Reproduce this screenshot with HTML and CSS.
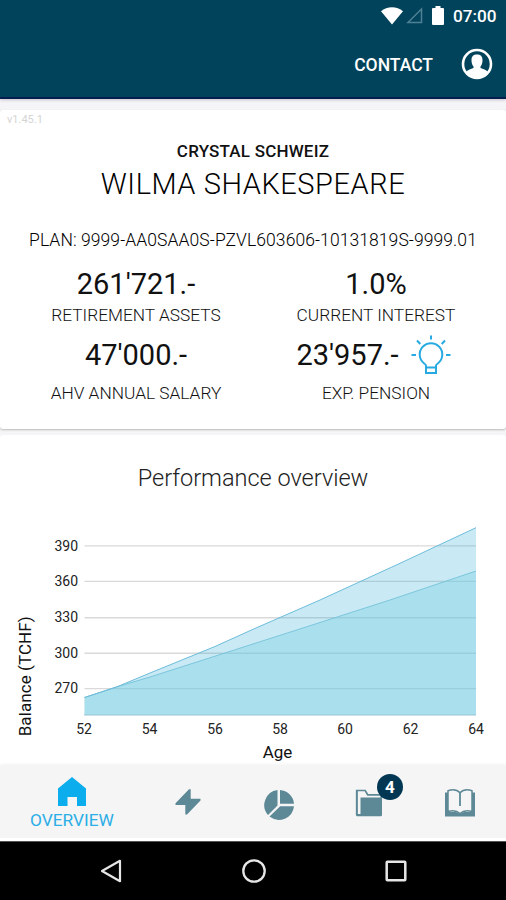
FILE: index.html
```html
<!DOCTYPE html>
<html lang="en">
<head>
<meta charset="utf-8">
<title>Overview</title>
<link rel="stylesheet" href="styles.css">
</head>
<body>
<div class="phone">
  <header class="header">
    <div class="status">
      <svg class="wifi" width="22" height="18" viewBox="0 0 22 18"><path d="M0 4.2C6-1.1 16-1.1 22 4.2L11 17.5z" fill="#fff"/></svg>
      <svg class="signal" width="18" height="18" viewBox="0 0 18 18"><path d="M15.500 2v13.500H2z" fill="none" stroke="#4f8095" stroke-width="1.500"/></svg>
      <svg class="battery" width="12" height="19" viewBox="0 0 12 19"><path d="M3.500 0h5v2H11q1 0 1 1v15q0 1-1 1H1q-1 0-1-1V3q0-1 1-1h2.500z" fill="#fff"/></svg>
      <span class="clock">07:00</span>
    </div>
    <div class="toolbar">
      <a class="contact">CONTACT</a>
      <svg class="avatar" width="32" height="32" viewBox="0 0 32 32">
        <circle cx="16" cy="16" r="14" fill="none" stroke="#fff" stroke-width="2.600"/>
        <path d="M5 24c2-2.600 5-3 7.500-4v-1.500c-1.500-1.500-2-4-2-6.200 0-4 2-5.700 5.500-5.700s5.500 1.700 5.500 5.700c0 2.200-.5 4.700-2 6.200V20c2.500 1 5.500 1.400 7.500 4-2.500 3.600-6.500 6-11 6s-8.500-2.400-11-6z" fill="#fff"/>
      </svg>
    </div>
  </header>

  <main class="content">
    <section class="card summary">
      <div class="version">v1.45.1</div>
      <h2 class="company"><span>CRYSTAL SCHWEIZ</span></h2>
      <h1 class="person"><span>WILMA SHAKESPEARE</span></h1>
      <div class="plan"><span>PLAN: 9999-AA0SAA0S-PZVL603606-10131819S-9999.01</span></div>
      <div class="figures">
        <div class="figure"><div class="value">261'721.-</div><div class="label">RETIREMENT ASSETS</div></div>
        <div class="figure"><div class="value">1.0%</div><div class="label">CURRENT INTEREST</div></div>
        <div class="figure low"><div class="value">47'000.-</div><div class="label">AHV ANNUAL SALARY</div></div>
        <div class="figure low"><div class="value pension"><span>23'957.-</span>
          <svg class="bulb" width="40" height="40" viewBox="0 0 40 40" fill="none" stroke="#27aae1" stroke-width="2"><path d="M15 32.500v-1.700c0-1-.8-1.700-1.800-2.300a11.300 11.300 0 1 1 13.600 0c-1 .6-1.800 1.300-1.800 2.300v1.700M15 32.500h10V38H15zM20 .5v4M6 5.500l3.300 3.500M34 5.500l-3.300 3.500M.5 20H5M35 20h4.500"/></svg>
        </div><div class="label">EXP. PENSION</div></div>
      </div>
    </section>

    <section class="card performance">
      <h3 class="chart-title"><span>Performance overview</span></h3>
      <svg class="chart" width="506" height="260" viewBox="0 506 506 260">
        <g stroke="#d9d9d9" stroke-width="1.400"><path d="M84.500 545.900H476M84.500 581.400H476M84.500 617.700H476M84.500 653.200H476M84.500 688.600H476"/></g>
        <path d="M84.500 697.500L117 686.800L150 673L215 646.500L253 629.300L320 600L400 563.300L476 527.700V715H84.500z" fill="#27aad5" fill-opacity=".25"/>
        <path d="M84.500 697.500L117 686.800L150 677L215 656.200L253 644L320 622.500L390 600L476 571V715H84.500z" fill="#7cd0e6" fill-opacity=".4"/>
        <path d="M84.500 697.500L117 686.800L150 677L215 656.200L253 644L320 622.500L390 600L476 571" fill="none" stroke="#7bc6dc" stroke-width="1"/>
        <path d="M84.500 697.500L117 686.800L150 673L215 646.500L253 629.300L320 600L400 563.300L476 527.700" fill="none" stroke="#6dbcda" stroke-width="1"/>
        <path d="M84 715H476" stroke="#9bc5d2" stroke-width="1"/>
        <g class="tick y"><text x="78" y="550.500">390</text><text x="78" y="586">360</text><text x="78" y="622.300">330</text><text x="78" y="658">300</text><text x="78" y="693.300">270</text></g>
        <g class="tick x"><text x="84" y="733.500">52</text><text x="149.500" y="733.500">54</text><text x="215" y="733.500">56</text><text x="280" y="733.500">58</text><text x="345" y="733.500">60</text><text x="410.500" y="733.500">62</text><text x="476" y="733.500">64</text></g>
        <text class="axis" x="277.500" y="757.500">Age</text>
        <text class="axis" transform="translate(31 676.300) rotate(-90)" textLength="120">Balance (TCHF)</text>
      </svg>
    </section>
  </main>

  <nav class="tabs">
    <a class="tab active">
      <svg width="28" height="30" viewBox="0 0 28 30"><path d="M14 0l14 11.500V29H19V20H9.500v9H0V11.500z" fill="#0badec"/></svg>
      <span>OVERVIEW</span>
    </a>
    <a class="tab"><svg width="26" height="26" viewBox="0 0 26 26"><path d="M14 .3L.5 14.300v1.700h9.800V25.500h1.700L25.500 11.500V9.800h-9.800V.3z" fill="#5d8997"/></svg></a>
    <a class="tab"><svg width="32" height="32" viewBox="0 0 32 32" fill="#5d8997"><path d="M14.500 1v15.500L5 26A15.200 15.200 0 0 1 14.500 1zM17 1A15 15 0 0 1 31 14.700H17zM31 17.200A15.200 15.200 0 0 1 6.500 27.600l10.700-10.400z"/></svg></a>
    <a class="tab"><span class="folder">
      <svg width="28" height="28" viewBox="0 0 28 28"><path d="M1.700 26V1.500h8.500l2.500 4.300h13.500v6" fill="none" stroke="#5d8997" stroke-width="1.700"/><path d="M1 2h1.700v23H5.500V8.500H27V26q0 1.300-1.300 1.300H2.300Q1 27.300 1 26z" fill="#5d8997"/></svg>
      <b class="badge">4</b></span></a>
    <a class="tab book"><svg width="30" height="28" viewBox="0 0 30 28"><path d="M0 3.500h3.500V23H11l4 1.800 4-1.800h7.500V3.500H30V27.500H0z" fill="#5d8997"/><path d="M3 22.500V1.700c4-1.400 9-1 12 2 3-3 8-3.400 12-2v20.800c-5-1.600-9-.8-12 2-3-2.800-7-3.600-12-2z" fill="#f5f5f5" stroke="#5d8997" stroke-width="1.500"/><path d="M15 4v13" stroke="#5d8997" stroke-width="1.800"/></svg></a>
  </nav>

  <footer class="system">
    <svg width="22" height="24" viewBox="0 0 22 24"><path d="M20 1.800v20.400L2 12z" fill="none" stroke="#e6e6e6" stroke-width="2.200" stroke-linejoin="round"/></svg>
    <svg width="24" height="24" viewBox="0 0 24 24"><circle cx="12" cy="12" r="10.700" fill="none" stroke="#e6e6e6" stroke-width="2.300"/></svg>
    <svg width="22" height="22" viewBox="0 0 22 22"><rect x="1.700" y="1.700" width="18.600" height="18.600" rx=".7" fill="none" stroke="#e6e6e6" stroke-width="2.500"/></svg>
  </footer>
</div>
</body>
</html>
```
FILE: styles.css
```css
* { box-sizing: border-box; }
body { margin: 0; font-family: Roboto, "Liberation Sans", sans-serif; color: #111; }
svg { display: block; flex: none; }
h1, h2, h3 { margin: 0; font-weight: 300; }
.phone { width: 506px; height: 900px; display: flex; flex-direction: column; overflow: hidden; background: #f5f4f6; }

.header { flex: none; height: 99px; background: #00435b; border-bottom: 2px solid #061d50; color: #fff; box-shadow: 0 1px 3px #c6c2cc; z-index: 1; }
.status { display: flex; justify-content: flex-end; align-items: center; height: 31px; padding-right: 9px; }
.wifi { margin-right: 3px; }
.signal { margin-right: 8px; }
.battery { margin-right: 9px; }
.clock { font-size: 17.200px; font-weight: 500; line-height: 30px; width: 44px; white-space: nowrap; }
.toolbar { display: flex; justify-content: flex-end; align-items: center; height: 66px; padding-right: 13px; }
.contact { padding-top: 2px; font-size: 17.500px; font-weight: 500; line-height: 24px; margin-right: 28px; }

.content { flex: 1; min-height: 0; overflow: hidden; padding-top: 11px; }
.card { background: #fff; border-radius: 3px; }
.summary { height: 319px; box-shadow: 0 1px 2px #bbb; text-align: center; }
.version { height: 30px; padding: 3px 0 0 7px; text-align: left; font-size: 11px; line-height: 14px; color: #d5d5d5; }
.company { font-size: 17px; font-weight: 500; line-height: 23px; letter-spacing: .2px; }
.person { font-size: 29px; font-weight: 300; color: #000; line-height: 42px; letter-spacing: .55px; }
.plan { padding-top: 24px; font-size: 17.500px; font-weight: 300; color: #000; line-height: 22px; letter-spacing: .08px; white-space: nowrap; }
.figures { display: grid; grid-template-columns: 240px 240px; padding: 15px 10px 0 16px; }
.figure { height: 70px; }
.value { display: flex; justify-content: center; align-items: center; height: 36px; font-size: 29px; line-height: 36px; }
.pension { margin-right: 5px; gap: 12px; }
.label { padding-top: 2px; font-size: 17.300px; font-weight: 300; line-height: 22px; white-space: nowrap; }
.low .value { padding-top: 2px; }
.low .label { padding-top: 10px; }

.performance { margin-top: 6px; height: 340px; }
.chart-title { height: 71px; padding-top: 28px; font-size: 23.500px; line-height: 30px; text-align: center; color: #222; }
.tick { font-size: 14px; fill: #222; }
.tick.y { text-anchor: end; }
.tick.x { text-anchor: middle; }
.axis { font-size: 17px; text-anchor: middle; fill: #111; }

.tabs { flex: none; height: 76px; display: grid; grid-template-columns: 144px 88px 94px 92px 88px; background: #f5f5f5; border-bottom: 3px solid #fff; box-shadow: 0 0 4px #eee; }
.tab { display: flex; justify-content: center; padding-top: 24px; }
.book { padding-right: 5px; }
.active { flex-direction: column; justify-content: flex-start; align-items: center; padding-top: 12px; color: #2caee6; font-size: 17.300px; line-height: 26px; }
.folder { position: relative; height: 28px; margin-right: 5px; }
.folder { margin-right: 6px; }
.badge { position: absolute; left: 22px; top: -15px; width: 26px; height: 26px; border-radius: 50%; background: #023753; color: #fff; font-size: 17px; font-weight: 700; line-height: 27px; text-align: center; }

.system { flex: none; height: 59px; display: flex; justify-content: space-between; align-items: center; padding: 0 99px 0 100px; background: #000; border-top: 1px solid #555; }
```
